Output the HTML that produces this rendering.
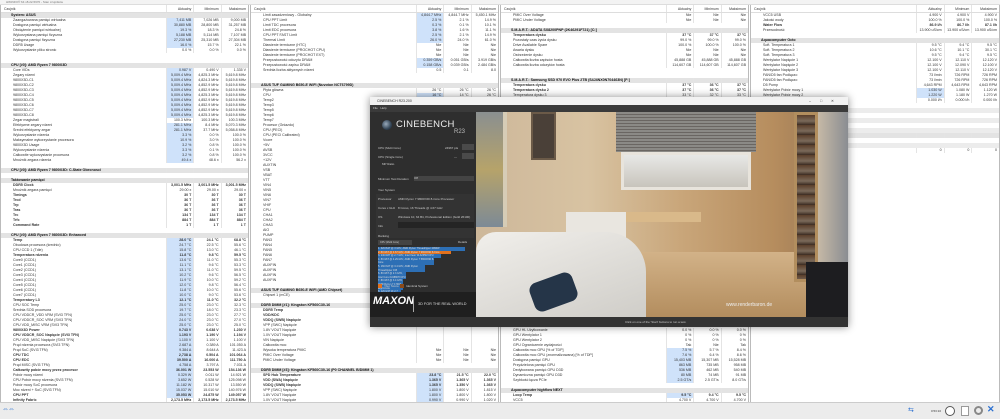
<!DOCTYPE html>
<html><head><meta charset="utf-8">
<style>
*{margin:0;padding:0;box-sizing:border-box}
body{width:1000px;height:419px;overflow:hidden;background:#fff;font-family:"Liberation Sans",sans-serif;position:relative}
.tb{position:absolute;left:0;top:0;width:1000px;height:5px;background:#f3f3f3;font-size:3px;line-height:5px;color:#777;padding-left:6px;border-bottom:1px solid #ddd}
.p{position:absolute;top:5px;height:397px;overflow:hidden;background:#fff;border-left:1px solid #bbb;border-right:1px solid #bbb}
.h{height:8px;display:flex;font-size:3.5px;line-height:8px;color:#333;border-bottom:1px solid #ddd}
.h i,.r i{font-style:normal;flex:0 0 165px;padding-left:3px;overflow:hidden;white-space:nowrap}
.h u,.r u{text-decoration:none;flex:1;text-align:right;padding-right:2px;border-left:1px solid #e4e4e4;white-space:nowrap;overflow:hidden}
.r{height:5px;display:flex;font-size:3.6px;line-height:5px;color:#333}
.r i{padding-left:12px}
.r.s{background:#e3e3e3;font-weight:bold;color:#111}
.r.s i{padding-left:10px}
.r.b u:first-of-type{background:#cfe2fa}
.r.k{font-weight:bold}
.r.g{background:#ececec}
.cb{position:absolute;left:370px;top:97px;width:478px;height:230px;background:#2b2b2b;box-shadow:0 0 8px rgba(0,0,0,.45)}
.sb{position:absolute;left:0;top:402px;width:1000px;height:17px;background:#ececec;border-top:1px solid #ccc}
</style></head><body>
<div class="tb">HWiNFO® 64 v8.22-5670 - Stan czujników</div>

<div class="p" style="left:0;width:249px">
<div class="h"><i>Czujnik</i><u>Aktualny</u><u>Minimum</u><u>Maksimum</u></div>
<div class="r s"><i>System: ASUS</i><u></u><u></u><u></u></div>
<div class="r b"><i>Zaangażowana pamięć wirtualna</i><u>7,411 MB</u><u>7,026 MB</u><u>9,000 MB</u></div>
<div class="r b"><i>Dostępna pamięć wirtualna</i><u>30,880 MB</u><u>28,800 MB</u><u>31,257 MB</u></div>
<div class="r b"><i>Obciążenie pamięci wirtualnej</i><u>19.3 %</u><u>18.3 %</u><u>24.8 %</u></div>
<div class="r b"><i>Wykorzystana pamięć fizyczna</i><u>5,188 MB</u><u>5,114 MB</u><u>7,107 MB</u></div>
<div class="r b"><i>Dostępna pamięć fizyczna</i><u>27,230 MB</u><u>25,310 MB</u><u>27,304 MB</u></div>
<div class="r b"><i>DDR5 Usage</i><u>16.0 %</u><u>15.7 %</u><u>22.1 %</u></div>
<div class="r"><i>Wykorzystanie pliku stronic</i><u>0.0 %</u><u>0.0 %</u><u>0.0 %</u></div>
<div class="r"></div><div class="r"></div>
<div class="r s"><i>CPU [#0]: AMD Ryzen 7 9800X3D</i><u></u><u></u><u></u></div>
<div class="r b"><i>Core VIDs</i><u>0.987 V</u><u>0.490 V</u><u>1.335 V</u></div>
<div class="r b"><i>Zegary rdzeni</i><u>5,009.4 MHz</u><u>4,825.3 MHz</u><u>5,619.8 MHz</u></div>
<div class="r b"><i>9800X3D-C1</i><u>5,009.4 MHz</u><u>4,824.3 MHz</u><u>5,619.8 MHz</u></div>
<div class="r b"><i>9800X3D-C2</i><u>5,009.4 MHz</u><u>4,852.9 MHz</u><u>5,619.8 MHz</u></div>
<div class="r b"><i>9800X3D-C3</i><u>5,009.4 MHz</u><u>4,852.9 MHz</u><u>5,619.8 MHz</u></div>
<div class="r b"><i>9800X3D-C4</i><u>5,009.4 MHz</u><u>4,825.3 MHz</u><u>5,619.8 MHz</u></div>
<div class="r b"><i>9800X3D-C5</i><u>5,009.4 MHz</u><u>4,852.9 MHz</u><u>5,619.8 MHz</u></div>
<div class="r b"><i>9800X3D-C6</i><u>5,009.4 MHz</u><u>4,852.9 MHz</u><u>5,619.8 MHz</u></div>
<div class="r b"><i>9800X3D-C7</i><u>5,009.4 MHz</u><u>4,852.9 MHz</u><u>5,619.8 MHz</u></div>
<div class="r b"><i>9800X3D-C8</i><u>5,009.4 MHz</u><u>4,825.3 MHz</u><u>5,619.8 MHz</u></div>
<div class="r"><i>Zegar magistrali</i><u>100.3 MHz</u><u>100.3 MHz</u><u>100.3 MHz</u></div>
<div class="r b"><i>Efektywne zegary rdzeni</i><u>281.1 MHz</u><u>8.4 MHz</u><u>5,070.3 MHz</u></div>
<div class="r b"><i>Średni efektywny zegar</i><u>281.1 MHz</u><u>37.7 MHz</u><u>5,058.8 MHz</u></div>
<div class="r b"><i>Wykorzystanie rdzenia</i><u>3.3 %</u><u>0.0 %</u><u>100.0 %</u></div>
<div class="r b"><i>Maksymalne wykorzystanie procesora</i><u>10.9 %</u><u>3.0 %</u><u>100.0 %</u></div>
<div class="r b"><i>9800X3D Usage</i><u>3.2 %</u><u>0.8 %</u><u>100.0 %</u></div>
<div class="r b"><i>Wykorzystanie rdzenia</i><u>3.3 %</u><u>0.1 %</u><u>100.0 %</u></div>
<div class="r b"><i>Całkowite wykorzystanie procesora</i><u>3.2 %</u><u>0.8 %</u><u>100.0 %</u></div>
<div class="r b"><i>Mnożnik zegara rdzenia</i><u>49.4 x</u><u>48.6 x</u><u>56.2 x</u></div>
<div class="r"></div>
<div class="r s"><i>CPU [#0]: AMD Ryzen 7 9800X3D: C-State Obecnosci</i><u></u><u></u><u></u></div>
<div class="r"></div>
<div class="r s"><i>Taktowanie pamięci</i><u></u><u></u><u></u></div>
<div class="r k"><i>DDR5 Clock</i><u>3,001.5 MHz</u><u>3,001.5 MHz</u><u>3,001.5 MHz</u></div>
<div class="r"><i>Mnożnik zegara pamięci</i><u>29.00 x</u><u>29.00 x</u><u>29.00 x</u></div>
<div class="r k"><i>Timings</i><u>30 T</u><u>30 T</u><u>30 T</u></div>
<div class="r k"><i>Trcd</i><u>36 T</u><u>36 T</u><u>36 T</u></div>
<div class="r k"><i>Trp</i><u>36 T</u><u>36 T</u><u>36 T</u></div>
<div class="r k"><i>Tras</i><u>36 T</u><u>36 T</u><u>36 T</u></div>
<div class="r k"><i>Trc</i><u>134 T</u><u>134 T</u><u>134 T</u></div>
<div class="r k"><i>Trfc</i><u>884 T</u><u>884 T</u><u>884 T</u></div>
<div class="r k"><i>Command Rate</i><u>1 T</u><u>1 T</u><u>1 T</u></div>
<div class="r"></div>
<div class="r s"><i>CPU [#0]: AMD Ryzen 7 9800X3D: Enhanced</i><u></u><u></u><u></u></div>
<div class="r b k"><i>Temp</i><u>28.0 °C</u><u>24.1 °C</u><u>68.8 °C</u></div>
<div class="r b"><i>Obudowa procesora (średnio)</i><u>24.7 °C</u><u>22.5 °C</u><u>55.6 °C</u></div>
<div class="r b"><i>CPU CCD 1 (Tdie)</i><u>15.8 °C</u><u>13.0 °C</u><u>46.1 °C</u></div>
<div class="r b k"><i>Temperatura rdzenia</i><u>11.8 °C</u><u>9.8 °C</u><u>59.5 °C</u></div>
<div class="r b"><i>Core0 (CCD1)</i><u>13.6 °C</u><u>11.0 °C</u><u>55.3 °C</u></div>
<div class="r b"><i>Core1 (CCD1)</i><u>11.1 °C</u><u>9.6 °C</u><u>53.3 °C</u></div>
<div class="r b"><i>Core2 (CCD1)</i><u>13.1 °C</u><u>11.0 °C</u><u>59.5 °C</u></div>
<div class="r b"><i>Core3 (CCD1)</i><u>10.2 °C</u><u>9.6 °C</u><u>56.5 °C</u></div>
<div class="r b"><i>Core4 (CCD1)</i><u>11.9 °C</u><u>10.0 °C</u><u>59.2 °C</u></div>
<div class="r b"><i>Core5 (CCD1)</i><u>12.0 °C</u><u>9.8 °C</u><u>56.4 °C</u></div>
<div class="r b"><i>Core6 (CCD1)</i><u>11.8 °C</u><u>10.0 °C</u><u>55.6 °C</u></div>
<div class="r b"><i>Core7 (CCD1)</i><u>10.0 °C</u><u>9.0 °C</u><u>53.6 °C</u></div>
<div class="r b k"><i>Temperatury L3</i><u>12.1 °C</u><u>11.0 °C</u><u>32.2 °C</u></div>
<div class="r b"><i>CPU SOC Temp</i><u>25.0 °C</u><u>23.0 °C</u><u>32.3 °C</u></div>
<div class="r b"><i>Średnia SOD procesora</i><u>19.7 °C</u><u>18.0 °C</u><u>23.3 °C</u></div>
<div class="r b"><i>CPU VDDCR_VDD VRM (SVI3 TFN)</i><u>25.0 °C</u><u>23.0 °C</u><u>27.7 °C</u></div>
<div class="r b"><i>CPU VDDCR_SOC VRM (SVI3 TFN)</i><u>24.0 °C</u><u>23.0 °C</u><u>27.0 °C</u></div>
<div class="r b"><i>CPU VDD_MISC VRM (SVI3 TFN)</i><u>25.0 °C</u><u>23.0 °C</u><u>25.0 °C</u></div>
<div class="r b k"><i>9800X3D Power</i><u>0.743 V</u><u>0.638 V</u><u>1.230 V</u></div>
<div class="r b k"><i>CPU VDDCR_SOC Napięcie (SVI3 TFN)</i><u>1.193 V</u><u>1.190 V</u><u>1.194 V</u></div>
<div class="r b"><i>CPU VDD_MISC Napięcie (SVI3 TFN)</i><u>1.100 V</u><u>1.100 V</u><u>1.100 V</u></div>
<div class="r b"><i>Prąd rdzenia procesora (SVI3 TFN)</i><u>2.687 A</u><u>0.389 A</u><u>101.050 A</u></div>
<div class="r b"><i>Prąd SoC (SVI3 TFN)</i><u>9.384 A</u><u>8.644 A</u><u>11.423 A</u></div>
<div class="r b k"><i>CPU TDC</i><u>2,738 A</u><u>0.504 A</u><u>101.064 A</u></div>
<div class="r b k"><i>CPU EDC</i><u>39.500 A</u><u>16.000 A</u><u>111.750 A</u></div>
<div class="r b"><i>Prąd MISC (SVI3 TFN)</i><u>4.758 A</u><u>3.797 A</u><u>7.031 A</u></div>
<div class="r b k"><i>Całkowity pobór mocy przez procesor</i><u>36.001 W</u><u>23.553 W</u><u>154.136 W</u></div>
<div class="r b"><i>Pobór mocy rdzeni</i><u>0.329 W</u><u>0.011 W</u><u>14.921 W</u></div>
<div class="r b"><i>CPU Pobór mocy rdzenia (SVI3 TFN)</i><u>3.652 W</u><u>0.528 W</u><u>125.098 W</u></div>
<div class="r b"><i>Pobór mocy SoC procesora</i><u>11.182 W</u><u>10.317 W</u><u>13.550 W</u></div>
<div class="r b"><i>Moc rdzeni + SoC (SVI3 TFN)</i><u>15.037 W</u><u>15.010 W</u><u>140.976 W</u></div>
<div class="r b k"><i>CPU PPT</i><u>35.053 W</u><u>24.875 W</u><u>149.057 W</u></div>
<div class="r k"><i>Infinity Fabric</i><u>2,173.5 MHz</u><u>2,173.5 MHz</u><u>2,173.5 MHz</u></div>
<div class="r k"><i>DDR5 2x/4 Clock</i><u>3,001.5 MHz</u><u>3,001.5 MHz</u><u>3,001.5 MHz</u></div>
<div class="r b"><i>L3 Clocks</i><u>2,771.3 MHz</u><u>575.3 MHz</u><u>5,110.9 MHz</u></div>
</div>

<div class="p" style="left:250px;width:249px">
<div class="h"><i>Czujnik</i><u>Aktualny</u><u>Minimum</u><u>Maksimum</u></div>
<div class="r b"><i>Limit zasadzeniowy - Globalny</i><u>4,844.7 MHz</u><u>4,844.7 MHz</u><u>5,450.1 MHz</u></div>
<div class="r b"><i>CPU PPT Limit</i><u>2.5 %</u><u>2.1 %</u><u>14.9 %</u></div>
<div class="r b"><i>Limit TDC procesora</i><u>0.3 %</u><u>0.1 %</u><u>10.1 %</u></div>
<div class="r b"><i>Limit EDC procesora</i><u>3.8 %</u><u>1.6 %</u><u>11.1 %</u></div>
<div class="r b"><i>CPU PPT FAST Limit</i><u>2.5 %</u><u>2.1 %</u><u>14.9 %</u></div>
<div class="r b"><i>Thermal Limit</i><u>26.0 %</u><u>24.0 %</u><u>61.0 %</u></div>
<div class="r"><i>Dławienie termiczne (HTC)</i><u>Nie</u><u>Nie</u><u>Nie</u></div>
<div class="r"><i>Dławienie termiczne (PROCHOT CPU)</i><u>Nie</u><u>Nie</u><u>Nie</u></div>
<div class="r"><i>Dławienie termiczne (PROCHOT EXT)</i><u>Nie</u><u>Nie</u><u>Nie</u></div>
<div class="r b"><i>Przepustowość odczytu DRAM</i><u>0.359 GB/s</u><u>0.051 GB/s</u><u>3.919 GB/s</u></div>
<div class="r b"><i>Przepustowość zapisu DRAM</i><u>0.158 GB/s</u><u>0.039 GB/s</u><u>2.484 GB/s</u></div>
<div class="r"><i>Średnia liczba aktywnych rdzeni</i><u>0.5</u><u>0.1</u><u>8.0</u></div>
<div class="r"></div><div class="r"></div>
<div class="r s"><i>ASUS TUF GAMING B650-E WIFI (Nuvoton NCT6799D)</i><u></u><u></u><u></u></div>
<div class="r"><i>Płyta główna</i><u>26 °C</u><u>26 °C</u><u>26 °C</u></div>
<div class="r b"><i>CPU</i><u>16 °C</u><u>14 °C</u><u>26 °C</u></div>
<div class="r"><i>Temp2</i><u>26 °C</u><u>26 °C</u><u>26 °C</u></div>
<div class="r"><i>Temp3</i><u></u><u></u><u></u></div><div class="r"><i>Temp5</i><u></u><u></u><u></u></div>
<div class="r"><i>Temp6</i><u></u><u></u><u></u></div><div class="r"><i>Temp7</i><u></u><u></u><u></u></div>
<div class="r"><i>Procesor (Gniazdo)</i><u></u><u></u><u></u></div><div class="r"><i>CPU (PECI)</i><u></u><u></u><u></u></div>
<div class="r"><i>CPU (PECI Calibrated)</i><u></u><u></u><u></u></div><div class="r"><i>Vcore</i><u></u><u></u><u></u></div>
<div class="r"><i>+5V</i><u></u><u></u><u></u></div><div class="r"><i>AVSB</i><u></u><u></u><u></u></div>
<div class="r"><i>3VCC</i><u></u><u></u><u></u></div><div class="r"><i>+12V</i><u></u><u></u><u></u></div>
<div class="r"><i>AUXTIN</i><u></u><u></u><u></u></div><div class="r"><i>VSB</i><u></u><u></u><u></u></div>
<div class="r"><i>VBAT</i><u></u><u></u><u></u></div><div class="r"><i>VTT</i><u></u><u></u><u></u></div>
<div class="r"><i>VIN4</i><u></u><u></u><u></u></div><div class="r"><i>VIN5</i><u></u><u></u><u></u></div>
<div class="r"><i>VIN6</i><u></u><u></u><u></u></div><div class="r"><i>VIN7</i><u></u><u></u><u></u></div>
<div class="r"><i>VHIF</i><u></u><u></u><u></u></div><div class="r"><i>CPU</i><u></u><u></u><u></u></div>
<div class="r"><i>CHA1</i><u></u><u></u><u></u></div><div class="r"><i>CHA2</i><u></u><u></u><u></u></div>
<div class="r"><i>CHA3</i><u></u><u></u><u></u></div><div class="r"><i>AIO</i><u></u><u></u><u></u></div>
<div class="r"><i>PUMP</i><u></u><u></u><u></u></div><div class="r"><i>FAN3</i><u></u><u></u><u></u></div>
<div class="r"><i>FAN4</i><u></u><u></u><u></u></div><div class="r"><i>FAN5</i><u></u><u></u><u></u></div>
<div class="r"><i>FAN6</i><u></u><u></u><u></u></div><div class="r"><i>FAN7</i><u></u><u></u><u></u></div>
<div class="r"><i>AUXFIN</i><u></u><u></u><u></u></div><div class="r"><i>AUXFIN</i><u></u><u></u><u></u></div>
<div class="r"><i>AUXFIN</i><u></u><u></u><u></u></div><div class="r"><i>AUXFIN</i><u></u><u></u><u></u></div>
<div class="r"></div>
<div class="r s"><i>ASUS TUF GAMING B650-E WIFI (AMD Chipset)</i><u></u><u></u><u></u></div>
<div class="r"><i>Chipset 1 (mCE)</i><u>Nie</u><u>Nie</u><u>Nie</u></div>
<div class="r"></div>
<div class="r s"><i>DDR5 DIMM [#1]: Kingston KF560C30-16</i><u></u><u></u><u></u></div>
<div class="r k"><i>DDR5 Temp</i><u></u><u></u><u></u></div>
<div class="r k"><i>VDD/KDC</i><u></u><u></u><u></u></div>
<div class="r k"><i>VDDQ (SWB) Napięcie</i><u></u><u></u><u></u></div>
<div class="r"><i>VPP (SWC) Napięcie</i><u></u><u></u><u></u></div>
<div class="r"><i>1.8V VOUT Napięcie</i><u></u><u></u><u></u></div>
<div class="r"><i>1.0V VOUT Napięcie</i><u></u><u></u><u></u></div>
<div class="r"><i>VIN Napięcie</i><u></u><u></u><u></u></div>
<div class="r"><i>Całkowita moc</i><u></u><u></u><u></u></div>
<div class="r"><i>Wysoka temperatura PMIC</i><u>Nie</u><u>Nie</u><u>Nie</u></div>
<div class="r"><i>PMIC Over Voltage</i><u>Nie</u><u>Nie</u><u>Nie</u></div>
<div class="r"><i>PMIC Under Voltage</i><u>Nie</u><u>Nie</u><u>Nie</u></div>
<div class="r"></div>
<div class="r s"><i>DDR5 DIMM [#3]: Kingston KF560C30-16 (P0 CHANNEL B/DIMM 1)</i><u></u><u></u><u></u></div>
<div class="r b k"><i>SPD Hub Temperature</i><u>23.8 °C</u><u>21.5 °C</u><u>22.0 °C</u></div>
<div class="r b k"><i>VDD (SWA) Napięcie</i><u>1.365 V</u><u>1.365 V</u><u>1.365 V</u></div>
<div class="r b k"><i>VDDQ (SWB) Napięcie</i><u>1.365 V</u><u>1.350 V</u><u>1.365 V</u></div>
<div class="r b"><i>VPP (SWC) Napięcie</i><u>1.800 V</u><u>1.800 V</u><u>1.815 V</u></div>
<div class="r b"><i>1.8V VOUT Napięcie</i><u>1.800 V</u><u>1.800 V</u><u>1.800 V</u></div>
<div class="r b"><i>1.0V VOUT Napięcie</i><u>0.990 V</u><u>0.990 V</u><u>1.020 V</u></div>
<div class="r b"><i>VIN Napięcie</i><u>4.920 V</u><u>4.920 V</u><u>5.040 V</u></div>
<div class="r b"><i>Całkowita moc</i><u>0.375 W</u><u>0.000 W</u><u>2.250 W</u></div>
<div class="r"><i>Wysoka temperatura PMIC</i><u>Nie</u><u>Nie</u><u>Nie</u></div>
</div>

<div class="p" style="left:500px;width:249px">
<div class="h"><i>Czujnik</i><u>Aktualny</u><u>Minimum</u><u>Maksimum</u></div>
<div class="r"><i>PMIC Over Voltage</i><u>Nie</u><u>Nie</u><u>Nie</u></div>
<div class="r"><i>PMIC Under Voltage</i><u>Nie</u><u>Nie</u><u>Nie</u></div>
<div class="r"></div>
<div class="r s"><i>S.M.A.R.T.: ADATA SX8200PNP (2K46291F721) [C:]</i><u></u><u></u><u></u></div>
<div class="r k"><i>Temperatura dysku</i><u>37 °C</u><u>37 °C</u><u>37 °C</u></div>
<div class="r"><i>Pozostały czas życia dysku</i><u>99.0 %</u><u>99.0 %</u><u>99.0 %</u></div>
<div class="r"><i>Drive Available Spare</i><u>100.0 %</u><u>100.0 %</u><u>100.0 %</u></div>
<div class="r"><i>Awaria dysku</i><u>Nie</u><u>Nie</u><u>Nie</u></div>
<div class="r"><i>Ostrzeżenie dysku</i><u>Nie</u><u>Nie</u><u>Nie</u></div>
<div class="r"><i>Całkowita liczba zapisów hosta</i><u>45,888 GB</u><u>45,888 GB</u><u>45,888 GB</u></div>
<div class="r"><i>Całkowita liczba odczytów hosta</i><u>114,607 GB</u><u>114,607 GB</u><u>114,607 GB</u></div>
<div class="r"></div><div class="r"></div>
<div class="r s"><i>S.M.A.R.T.: Samsung SSD 970 EVO Plus 2TB (S4J4NX0N704463N) [F:]</i><u></u><u></u><u></u></div>
<div class="r k"><i>Temperatura dysku</i><u>37 °C</u><u>36 °C</u><u>37 °C</u></div>
<div class="r k"><i>Temperatura dysku 2</i><u>37 °C</u><u>36 °C</u><u>37 °C</u></div>
<div class="r"><i>Temperatura dysku 3</i><u>33 °C</u><u>32 °C</u><u>33 °C</u></div>
<div class="r"><i>Pozostały czas życia dysku</i><u>100.0 %</u><u>100.0 %</u><u>100.0 %</u></div>
<div class="r"></div><div class="r"></div><div class="r"></div><div class="r"></div><div class="r"></div>
<div class="r"></div><div class="r"></div><div class="r"></div><div class="r"></div><div class="r"></div>
<div class="r"></div><div class="r"></div><div class="r"></div><div class="r"></div><div class="r"></div>
<div class="r"></div><div class="r"></div><div class="r"></div><div class="r"></div><div class="r"></div>
<div class="r"></div><div class="r"></div><div class="r"></div><div class="r"></div><div class="r"></div>
<div class="r"></div><div class="r"></div><div class="r"></div><div class="r"></div><div class="r"></div>
<div class="r"></div><div class="r"></div><div class="r"></div><div class="r"></div><div class="r"></div>
<div class="r"></div><div class="r"></div><div class="r"></div><div class="r"></div><div class="r"></div>
<div class="r"></div><div class="r"></div><div class="r"></div><div class="r"></div><div class="r"></div>
<div class="r"><i>GPU HL Użytkowanie</i><u>0.0 %</u><u>0.0 %</u><u>0.0 %</u></div>
<div class="r"><i>GPU Wentylator 1</i><u>0 %</u><u>0 %</u><u>0 %</u></div>
<div class="r"><i>GPU Wentylator 2</i><u>0 %</u><u>0 %</u><u>0 %</u></div>
<div class="r"><i>GPU Ograniczenie wydajności</i><u>Tak</u><u>Nie</u><u>Tak</u></div>
<div class="r b"><i>Całkowita moc GPU [% of TDP]</i><u>7.5 %</u><u>5.7 %</u><u>8.4 %</u></div>
<div class="r b"><i>Całkowita moc GPU (znormalizowana) [% of TDP]</i><u>7.6 %</u><u>6.4 %</u><u>8.6 %</u></div>
<div class="r b"><i>Dostępna pamięć GPU</i><u>15,403 MB</u><u>15,307 MB</u><u>15,528 MB</u></div>
<div class="r b"><i>Przydzielona pamięć GPU</i><u>863 MB</u><u>735 MB</u><u>958 MB</u></div>
<div class="r b"><i>Dedykowana pamięć GPU D3D</i><u>536 MB</u><u>462 MB</u><u>540 MB</u></div>
<div class="r b"><i>Dynamiczna pamięć GPU D3D</i><u>80 MB</u><u>74 MB</u><u>91 MB</u></div>
<div class="r b"><i>Szybkość łącza PCIe</i><u>2.5 GT/s</u><u>2.5 GT/s</u><u>8.0 GT/s</u></div>
<div class="r"></div>
<div class="r s"><i>Aquacomputer highflow NEXT</i><u></u><u></u><u></u></div>
<div class="r b k"><i>Loop Temp</i><u>9.5 °C</u><u>9.4 °C</u><u>9.5 °C</u></div>
<div class="r"><i>VCC5</i><u>4.700 V</u><u>4.700 V</u><u>4.700 V</u></div>
</div>

<div class="p" style="left:750px;width:250px">
<div class="h"><i>Czujnik</i><u>Aktualny</u><u>Minimum</u><u>Maksimum</u></div>
<div class="r"><i>VCC5 USB</i><u>4.900 V</u><u>4.900 V</u><u>4.900 V</u></div>
<div class="r"><i>Jakość wody</i><u>100.0 %</u><u>100.0 %</u><u>100.0 %</u></div>
<div class="r k"><i>Water Flow</i><u>86.9 l/h</u><u>86.7 l/h</u><u>87.1 l/h</u></div>
<div class="r"><i>Przewodność</i><u>13.900 uS/cm</u><u>13.900 uS/cm</u><u>13.900 uS/cm</u></div>
<div class="r"></div>
<div class="r s"><i>Aquacomputer Octo</i><u></u><u></u><u></u></div>
<div class="r"><i>Soft. Temperatura 1</i><u>9.5 °C</u><u>9.4 °C</u><u>9.5 °C</u></div>
<div class="r"><i>Soft. Temperatura 2</i><u>10.6 °C</u><u>10.1 °C</u><u>30.1 °C</u></div>
<div class="r"><i>Soft. Temperatura 3</i><u>9.5 °C</u><u>9.4 °C</u><u>9.5 °C</u></div>
<div class="r"><i>Wentylator Napięcie 1</i><u>12.100 V</u><u>12.110 V</u><u>12.120 V</u></div>
<div class="r"><i>Wentylator Napięcie 2</i><u>12.100 V</u><u>12.090 V</u><u>12.100 V</u></div>
<div class="r"><i>Wentylator Napięcie 3</i><u>12.100 V</u><u>12.110 V</u><u>12.120 V</u></div>
<div class="r"><i>FAN/D5 fan Podłączo</i><u>73 l/min</u><u>726 RPM</u><u>726 RPM</u></div>
<div class="r"><i>FAN/D5 fan Podłączo</i><u>73 l/min</u><u>726 RPM</u><u>726 RPM</u></div>
<div class="r"><i>D5 Pump</i><u>4,643 RPM</u><u>4,643 RPM</u><u>4,643 RPM</u></div>
<div class="r b"><i>Wentylator Pobór mocy 1</i><u>1.030 W</u><u>1.080 W</u><u>1.120 W</u></div>
<div class="r b"><i>Wentylator Pobór mocy 2</i><u>1.220 W</u><u>1.180 W</u><u>1.270 W</u></div>
<div class="r"><i></i><u>0.000 l/h</u><u>0.000 l/h</u><u>0.000 l/h</u></div>
<div class="r"></div>
<div class="r g"></div><div class="r"></div><div class="r g"></div><div class="r"></div><div class="r g"></div>
<div class="r s"><i>Intel Wireless LAN Card - Wi-Fi 2</i><u></u><u></u><u></u></div>
<div class="r"></div>
<div class="r g"></div>
<div class="r"><i></i><u>0</u><u>0</u><u>0</u></div>
</div>

<div class="cb">
 <div style="position:absolute;left:0;top:0;width:478px;height:8px;background:#f2f2f2;font-size:3.5px;line-height:8px;color:#333;padding-left:7px">CINEBENCH R23.200
  <span style="position:absolute;right:5px;top:0;letter-spacing:9px">–□✕</span></div>
 <div style="position:absolute;left:0;top:8px;width:478px;height:7px;background:#3a3a3a;font-size:3px;line-height:7px;color:#ccc;padding-left:3px">File &nbsp; Help</div>
 <div style="position:absolute;left:0;top:15px;width:106px;height:205px;background:#2e2e2e;color:#ccc;font-size:3px">
  <div style="position:absolute;left:12px;top:8px;width:10px;height:10px;border-radius:50%;background:radial-gradient(circle at 40% 40%,#9ab 0,#345 60%,#123 100%)"></div>
  <div style="position:absolute;left:26px;top:7px;font-size:9.5px;color:#eee;letter-spacing:.3px">CINEBENCH</div>
  <div style="position:absolute;left:84px;top:17px;font-size:6px;color:#bbb">R23</div>
  <div style="position:absolute;left:8px;top:34px">CPU (Multi Core)</div><div style="position:absolute;left:75px;top:34px">24967 pts</div>
  <div style="position:absolute;left:92px;top:32px;width:12px;height:6px;background:#4a4a4a"></div>
  <div style="position:absolute;left:8px;top:43px">CPU (Single Core)</div><div style="position:absolute;left:84px;top:43px">---</div>
  <div style="position:absolute;left:92px;top:41px;width:12px;height:6px;background:#4a4a4a"></div>
  <div style="position:absolute;left:12px;top:50px">MP Ratio</div>
  <div style="position:absolute;left:8px;top:65px">Minimum Test Duration</div>
  <div style="position:absolute;left:44px;top:64px;width:60px;height:5px;background:#444">Off</div>
  <div style="position:absolute;left:8px;top:76px">Your System</div>
  <div style="position:absolute;left:6px;top:82px;width:98px;height:44px;background:#333"></div>
  <div style="position:absolute;left:8px;top:85px">Processor</div><div style="position:absolute;left:28px;top:85px">AMD Ryzen 7 9800X3D 8-Core Processor</div>
  <div style="position:absolute;left:8px;top:94px">Cores x GHz</div><div style="position:absolute;left:28px;top:94px">8 Cores, 16 Threads @ 4.67 GHz</div>
  <div style="position:absolute;left:8px;top:103px">OS</div><div style="position:absolute;left:28px;top:103px">Windows 10, 64 Bit, Professional Edition (build 26100)</div>
  <div style="position:absolute;left:8px;top:112px">Info</div><div style="position:absolute;left:28px;top:110px;width:76px;height:6px;background:#242424"></div>
  <div style="position:absolute;left:8px;top:122px">Ranking</div>
  <div style="position:absolute;left:8px;top:128px;width:34px;height:5px;background:#444;font-size:2.5px;line-height:5px;padding-left:2px">CPU (Multi Core)</div>
  <div style="position:absolute;left:88px;top:128px">Details</div>
  <div style="position:absolute;left:8px;top:135px;width:94px;font-size:2.5px;line-height:3.6px;color:#ddd">
   <div style="background:#2d6fb5;width:93%">1. 32C/64T @ 3 GHz, AMD Ryzen Threadripper 2990W</div>
   <div style="background:#e0711e;width:78%">2. 8C/16T @ 4.67 GHz, AMD Ryzen 7 9800X3D 8-Core</div>
   <div style="background:#2d6fb5;width:67%">3. 24C/48T @ 2.7 GHz, Intel Xeon W-3265M CPU</div>
   <div style="background:#2d6fb5;width:60%">4. 8C/16T @ 4.29 GHz, AMD Ryzen 7 5800X3D 8-Core</div>
   <div style="background:#2d6fb5;width:50%">5. 16C/32T @ 3.4 GHz, AMD Ryzen Threadripper 195</div>
   <div style="background:#2d6fb5;width:30%">6. 8C/16T @ 2.3 GHz, Intel Core i9-9880H CPU</div>
   <div style="background:#2d6fb5;width:27%">7. 8C/16T @ 3.4 GHz, AMD Ryzen 7 1700X Eight-Core</div>
   <div style="background:#2d6fb5;width:24%">8. 12C/24T @ 2.7 GHz, Intel Xeon CPU E5-2697 v2</div>
   <div style="background:#2d6fb5;width:20%">9. 12C/24T @ 2.66 GHz, Intel Xeon CPU X5650</div>
  </div>
  <div style="position:absolute;left:8px;top:172px;width:4px;height:4px;background:#e0711e"></div><div style="position:absolute;left:14px;top:172px">Your Score</div>
  <div style="position:absolute;left:30px;top:172px;width:4px;height:4px;background:#8a4a1a"></div><div style="position:absolute;left:36px;top:172px">Identical System</div>
  <div style="position:absolute;left:0;top:180px;width:106px;height:25px;background:#1f1f1f"></div>
  <div style="position:absolute;left:3px;top:183px;font-size:11px;font-weight:bold;font-style:italic;color:#fff">MAXON</div>
  <div style="position:absolute;left:43px;top:184px;width:1px;height:16px;background:#aaa"></div>
  <div style="position:absolute;left:48px;top:190px;font-size:3.8px;color:#ddd">3D FOR THE REAL WORLD</div>
 </div>
 <div style="position:absolute;left:106px;top:15px;width:372px;height:205px;overflow:hidden;background:linear-gradient(90deg,#cdb79a 0,#d8c3a2 30%,#c9a67a 55%,#b68d5e 80%,#8f7052 100%)">
  <div style="position:absolute;left:0;top:0;width:27px;height:115px;background:linear-gradient(180deg,#8a8f90,#b6a36a 50%,#7d8a96)"></div>
  <div style="position:absolute;left:27px;top:0;width:4px;height:115px;background:#d6ccb6"></div>
  <div style="position:absolute;left:55px;top:0;width:25px;height:48px;background:#4a4038;border:2px solid #6b5a48"></div>
  <div style="position:absolute;left:140px;top:0;width:140px;height:40px;background:repeating-linear-gradient(180deg,#8b8a86 0,#8b8a86 2px,#6a6662 2px,#6a6662 3px)"></div>
  <div style="position:absolute;left:145px;top:40px;width:130px;height:38px;background:linear-gradient(180deg,#e7e8e6,#c8c4bc);border:3px solid #e8e4dc"></div>
  <div style="position:absolute;left:135px;top:100px;width:90px;height:10px;background:#d9b98a"></div>
  <div style="position:absolute;left:120px;top:140px;width:210px;height:65px;background:linear-gradient(180deg,#d2b288,#b38d5e)"></div>
  <div style="position:absolute;left:318px;top:0;width:24px;height:170px;background:repeating-linear-gradient(180deg,#5a3e2a 0,#7a6a5a 6px,#3a2a20 10px);border:3px solid #b28e5e"></div>
  <div style="position:absolute;left:342px;top:0;width:30px;height:205px;background:linear-gradient(90deg,#c6b9a6,#8a8d92)"></div>
  <div style="position:absolute;left:330px;top:150px;width:42px;height:55px;background:#1d1d20"></div>
  <div style="position:absolute;left:90px;top:100px;width:60px;height:80px;background:#e9e6e0"></div>
  <div style="position:absolute;left:0;top:120px;width:170px;height:85px;background:linear-gradient(160deg,#f1efeb,#cfcdc8);border-radius:20px 40px 0 0"></div>
  <div style="position:absolute;left:55px;top:165px;width:45px;height:30px;background:#253548;border-radius:8px;transform:rotate(-20deg)"></div>
  <div style="position:absolute;left:250px;top:190px;font-size:5px;color:#eee">www.renderbaron.de</div>
 </div>
 <div style="position:absolute;left:0;top:220px;width:478px;height:10px;background:#333;font-size:3px;line-height:10px;color:#ccc;padding-left:255px">Click on one of the 'Start' buttons to run a test.</div>
</div>

<div class="sb">
 <div style="position:absolute;left:2px;top:3px;font-size:7px;color:#2a6fd0;letter-spacing:-1px">⇔⇔</div>
 <div style="position:absolute;left:908px;top:3px;font-size:7px;color:#2a6fd0">⇆</div>
 <div style="position:absolute;left:931px;top:6px;font-size:3px;color:#333">0:53:10</div>
 <div style="position:absolute;left:945px;top:3px;width:10px;height:10px;border:1px solid #555;border-radius:50%;background:#fff"></div>
 <div style="position:absolute;left:961px;top:3px;width:8px;height:10px;background:#fff;border:1px solid #999"></div>
 <div style="position:absolute;left:974px;top:3px;width:9px;height:9px;border:2px solid #888;border-radius:50%"></div>
 <div style="position:absolute;left:987px;top:1px;font-size:9px;color:#2a6fd0;font-weight:bold">✕</div>
</div>
</body></html>
